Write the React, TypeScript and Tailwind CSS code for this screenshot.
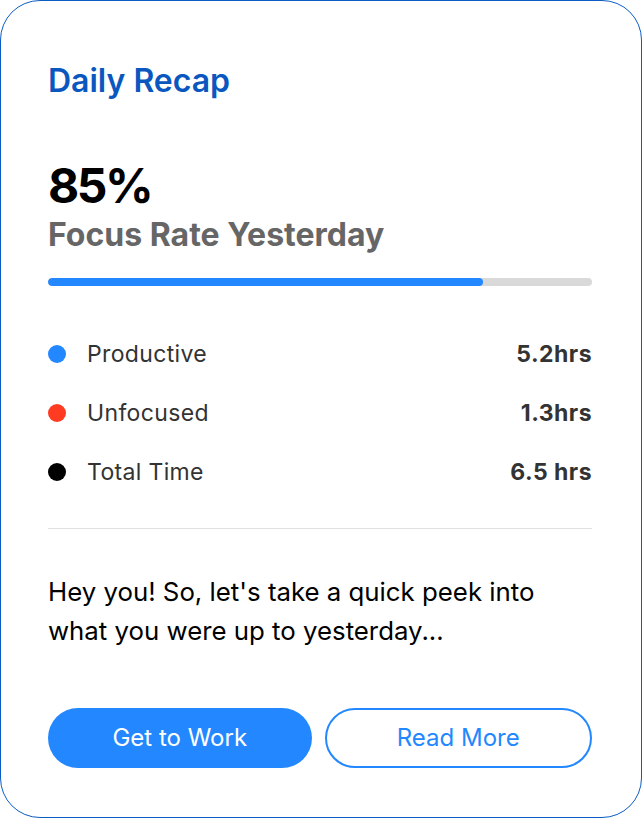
import React from "react";

const stats = [
  { label: "Productive", value: "5.2hrs", dot: "bg-[#2388ff]" },
  { label: "Unfocused", value: "1.3hrs", dot: "bg-[#ff3b22]" },
  { label: "Total Time", value: "6.5 hrs", dot: "bg-black" },
];

export default function App() {
  return (
    <div
      className="w-[642px] h-[818px] bg-white border border-[#0b5cc4] rounded-[40px] pl-[47px] pr-[49px] pt-[62px] flex flex-col"
      style={{ fontFamily: "Inter, 'Noto Sans', sans-serif" }}
    >
      <h1 className="text-[32px] leading-[36px] font-semibold text-[#0b57c0]">Daily Recap</h1>

      <div className="mt-[58px] text-[48px] leading-[58px] font-bold tracking-[-0.05em] text-black">85%</div>
      <div className="mt-[2px] text-[32px] leading-[36px] font-bold text-[#666666]">Focus Rate Yesterday</div>

      <div className="mt-[25px] h-[8px] w-full rounded-full bg-[#d9d9d9] overflow-hidden">
        <div className="h-full bg-[#2388ff] rounded-full" style={{ width: "80%" }} />
      </div>

      <div className="mt-[53px] flex flex-col gap-[29px]">
        {stats.map((s) => (
          <div key={s.label} className="flex items-center h-[30px]">
            <span className={`w-[18px] h-[18px] rounded-full ${s.dot}`} />
            <span className="ml-[21px] text-[23px] tracking-[0.015em] text-[#333333]">{s.label}</span>
            <span className="ml-auto text-[23px] font-bold tracking-[0.02em] text-[#333333]">{s.value}</span>
          </div>
        ))}
      </div>

      <div className="mt-[41px] h-px bg-[#e0e0e0]" />

      <p className="mt-[43px] text-[25.8px] leading-[39px] text-black">
        Hey you! So, let's take a quick peek into
        <br />
        what you were up to yesterday...
      </p>

      <div className="mt-[58px] flex gap-[13px]">
        <button className="flex-1 h-[60px] rounded-full bg-[#2388ff] text-white text-[24px]">Get to Work</button>
        <button className="flex-1 h-[60px] rounded-full border-2 border-[#2388ff] text-[#2388ff] text-[24px] bg-white">
          Read More
        </button>
      </div>
    </div>
  );
}
